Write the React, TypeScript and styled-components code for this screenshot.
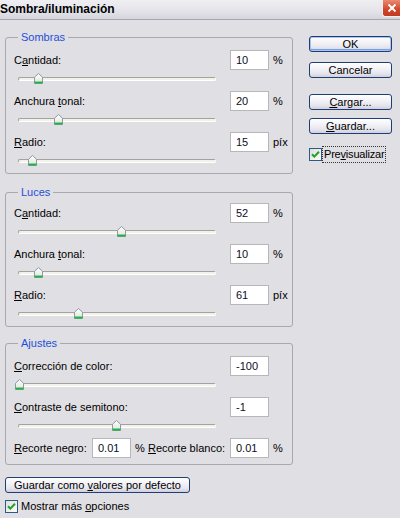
import React from "react";
import styled, { createGlobalStyle } from "styled-components";

const Global = createGlobalStyle`
  html, body { margin: 0; padding: 0; background: #e0dfe3; }
  body { font-family: "Liberation Sans", Arial, sans-serif; font-size: 11px; color: #000; }
  * { box-sizing: border-box; }
`;

const Window = styled.div`
  width: 400px;
  height: 518px;
  overflow: hidden;
  background: #e0dfe3;
  display: flex;
  flex-direction: column;
`;

const TitleBar = styled.div`
  height: 20px;
  flex: none;
  display: flex;
  align-items: flex-start;
  justify-content: space-between;
  background: linear-gradient(#efeff3, #e4e4ea 55%, #d5d5dd);
  border-bottom: 1px solid #a6a6b0;
`;

const Title = styled.div`
  font-weight: bold;
  font-size: 12px;
  line-height: 18px;
  color: #000;
`;

const CloseBtn = styled.div`
  width: 18px;
  height: 17px;
  display: flex;
  align-items: center;
  justify-content: center;
  background: linear-gradient(#e98a70, #d2452a 60%, #c13a20);
  border: 1px solid #f4f0f0;
  border-top: none;
  border-right: none;
  border-radius: 0 0 0 3px;
`;

const Body = styled.div`
  display: flex;
  padding-left: 5px;
`;

const LeftCol = styled.div`
  width: 288px;
  margin-top: 10px;
  display: flex;
  flex-direction: column;
`;

const RightCol = styled.div`
  width: 83px;
  margin-left: 16px;
  margin-top: 16px;
  display: flex;
  flex-direction: column;
`;

const Group = styled.fieldset<{ $pt: number; $pb: number; $mt: number }>`
  margin: ${(p) => p.$mt}px 0 0 0;
  padding: ${(p) => p.$pt}px 0 ${(p) => p.$pb}px 8px;
  min-width: 0;
  border: 1px solid #a9a8ad;
  border-radius: 3px;
`;

const Legend = styled.legend`
  color: #1f4fd8;
  font-size: 11px;
  line-height: 14px;
  padding: 0 3px;
  margin-left: 4px;
`;

const ParamBlock = styled.div`
  display: flex;
  flex-direction: column;
  height: 41px;
`;

const InputRow = styled.div`
  display: flex;
  align-items: center;
  height: 20px;
`;

const Label = styled.span<{ $w?: number }>`
  width: ${(p) => p.$w ?? 216}px;
  flex: none;
  white-space: nowrap;
`;

const NumBox = styled.div`
  width: 39px;
  height: 20px;
  flex: none;
  border: 1px solid #b7b6bb;
  background: #fff;
  padding-left: 5px;
  line-height: 18px;
  color: #0d0d26;
`;

const Unit = styled.span<{ $w?: number }>`
  margin-left: 4px;
  width: ${(p) => (p.$w ? `${p.$w}px` : "auto")};
  flex: none;
`;

const SliderRow = styled.div`
  padding-top: 7px;
  margin-left: 4px;
  width: 198px;
`;

const Track = styled.div`
  position: relative;
  height: 4px;
  border-radius: 2px;
  background: #f3f2ea;
  border: 1px solid;
  border-color: #a3a29e #ffffff #ffffff #a3a29e;
`;

const ThumbWrap = styled.div`
  position: absolute;
  top: -5px;
  width: 9px;
  height: 11px;
  line-height: 0;
`;

const Btn = styled.button<{ $def?: boolean; $w: number }>`
  width: ${(p) => p.$w}px;
  height: 16px;
  padding: 0;
  margin: 0;
  flex: none;
  font: 11px "Liberation Sans", Arial, sans-serif;
  line-height: 14px;
  color: #000;
  border: 1px solid #1f3e74;
  border-radius: 3px;
  background: linear-gradient(#ffffff, #f4f4f8 35%, #e6e5ed 75%, #cfcedc);
  box-shadow: ${(p) =>
    p.$def ? "inset 0 0 0 1px #a9c2f0, inset 0 -1px 0 1px #7c9fe0" : "none"};
`;

const CheckRow = styled.div<{ $mt: number }>`
  display: flex;
  align-items: center;
  margin-top: ${(p) => p.$mt}px;
  height: 13px;
`;

const CheckText = styled.span<{ $focus?: boolean }>`
  margin-left: ${(p) => (p.$focus ? 1 : 3)}px;
  padding: ${(p) => (p.$focus ? "1px 1px" : "0")};
  outline: ${(p) => (p.$focus ? "1px dotted #333" : "none")};
  line-height: 13px;
  white-space: nowrap;
  letter-spacing: ${(p) => (p.$focus ? "-0.2px" : "0")};
`;

const RecorteRow = styled.div`
  display: flex;
  align-items: center;
  height: 20px;
`;

const Gap = styled.div<{ $h: number }>`
  height: ${(p) => p.$h}px;
  flex: none;
`;

const Thumb: React.FC<{ pos: number }> = ({ pos }) => (
  <ThumbWrap style={{ left: `${1 + pos * 1.96 - 5.5}px` }}>
    <svg width="9" height="11" viewBox="0 0 9 11">
      <defs>
        <linearGradient id="tg" x1="0" y1="0" x2="0" y2="1">
          <stop offset="0" stopColor="#ffffff" />
          <stop offset="1" stopColor="#e2e2dc" />
        </linearGradient>
      </defs>
      <path d="M0.5 4.2 L4.5 0.5 L8.5 4.2 V10.5 H0.5 Z" fill="url(#tg)" stroke="#8b9aa6" />
      <rect x="0.5" y="8.5" width="8" height="2" fill="#27b04a" />
      <rect x="1" y="8" width="7" height="1" fill="#7fd68e" />
    </svg>
  </ThumbWrap>
);

const CheckBox: React.FC = () => (
  <svg width="13" height="13" viewBox="0 0 13 13" style={{ flex: "none" }}>
    <defs>
      <linearGradient id="cg" x1="0" y1="0" x2="1" y2="1">
        <stop offset="0" stopColor="#dcdcd7" />
        <stop offset="1" stopColor="#ffffff" />
      </linearGradient>
    </defs>
    <rect x="0.5" y="0.5" width="12" height="12" fill="url(#cg)" stroke="#2b5a8c" />
    <path d="M3 6.2 L5.3 8.6 L10 3.8" fill="none" stroke="#21a121" strokeWidth="2" />
  </svg>
);

type Param = { label: React.ReactNode; value: string; unit: string; pos: number };

const ParamRow: React.FC<Param> = ({ label, value, unit, pos }) => (
  <ParamBlock>
    <InputRow>
      <Label>{label}</Label>
      <NumBox>{value}</NumBox>
      <Unit>{unit}</Unit>
    </InputRow>
    <SliderRow>
      <Track>
        <Thumb pos={pos} />
      </Track>
    </SliderRow>
  </ParamBlock>
);

const cantidad = (
  <>
    C<u>a</u>ntidad:
  </>
);
const anchura = (
  <>
    Anchura <u>t</u>onal:
  </>
);
const radio = (
  <>
    <u>R</u>adio:
  </>
);

export default function App() {
  return (
    <Window>
      <Global />
      <TitleBar>
        <Title>Sombra/iluminación</Title>
        <CloseBtn>
          <svg width="10" height="10" viewBox="0 0 10 10">
            <path d="M1.5 1.5 L8.5 8.5 M8.5 1.5 L1.5 8.5" stroke="#fff" strokeWidth="1.8" />
          </svg>
        </CloseBtn>
      </TitleBar>
      <Body>
        <LeftCol>
          <Group $pt={6} $pb={0} $mt={0}>
            <Legend>Sombras</Legend>
            <ParamRow label={cantidad} value="10" unit="%" pos={10} />
            <ParamRow label={anchura} value="20" unit="%" pos={20} />
            <ParamRow label={radio} value="15" unit="píx" pos={7.1} />
          </Group>
          <Group $pt={4} $pb={0} $mt={11}>
            <Legend>Luces</Legend>
            <ParamRow label={cantidad} value="52" unit="%" pos={52.3} />
            <ParamRow label={anchura} value="10" unit="%" pos={10} />
            <ParamRow label={radio} value="61" unit="píx" pos={30.6} />
          </Group>
          <Group $pt={6} $pb={6} $mt={9}>
            <Legend>Ajustes</Legend>
            <ParamRow
              label={
                <>
                  <u>C</u>orrección de color:
                </>
              }
              value="-100"
              unit=""
              pos={0}
            />
            <ParamRow
              label={
                <>
                  <u>C</u>ontraste de semitono:
                </>
              }
              value="-1"
              unit=""
              pos={49.5}
            />
            <RecorteRow>
              <Label $w={78}>
                <u>R</u>ecorte negro:
              </Label>
              <NumBox>0.01</NumBox>
              <Unit $w={13}>%</Unit>
              <Label $w={82}>
                <u>R</u>ecorte blanco:
              </Label>
              <NumBox>0.01</NumBox>
              <Unit>%</Unit>
            </RecorteRow>
          </Group>
          <Gap $h={12} />
          <Btn $w={185}>
            Guardar como <u>v</u>alores por defecto
          </Btn>
          <CheckRow $mt={7}>
            <CheckBox />
            <CheckText>
              Mostrar más <u>o</u>pciones
            </CheckText>
          </CheckRow>
        </LeftCol>
        <RightCol>
          <Btn $w={83} $def>
            OK
          </Btn>
          <Gap $h={10} />
          <Btn $w={83}>Cancelar</Btn>
          <Gap $h={16} />
          <Btn $w={83}>
            <u>C</u>argar...
          </Btn>
          <Gap $h={8} />
          <Btn $w={83}>
            <u>G</u>uardar...
          </Btn>
          <CheckRow $mt={14}>
            <CheckBox />
            <CheckText $focus>
              Pre<u>v</u>isualizar
            </CheckText>
          </CheckRow>
        </RightCol>
      </Body>
    </Window>
  );
}
